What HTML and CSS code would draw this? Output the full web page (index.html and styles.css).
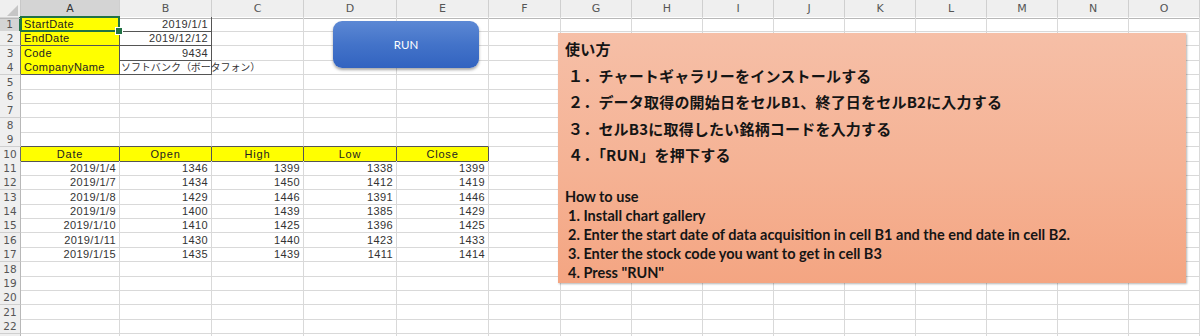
FILE: index.html
```html
<!DOCTYPE html>
<html lang="ja">
<head>
<meta charset="utf-8">
<title>Sheet</title>
<link rel="stylesheet" href="styles.css">
</head>
<body>
<div class="page">
  <div class="hdr">
    <div class="corner"><span class="tri"></span></div>
    <div class="ch sel">A</div><div class="ch">B</div><div class="ch">C</div><div class="ch">D</div><div class="ch">E</div><div class="ch">F</div><div class="ch">G</div><div class="ch">H</div><div class="ch">I</div><div class="ch">J</div><div class="ch">K</div><div class="ch">L</div><div class="ch">M</div><div class="ch">N</div><div class="ch">O</div>
  </div>

  <div class="row"><div class="rn sel dk">1</div><div class="c y bx active">StartDate</div><div class="c r bx">2019/1/1</div><div class="c"></div><div class="c"></div><div class="c"></div><div class="c"></div><div class="rest"></div></div>
  <div class="row"><div class="rn dk">2</div><div class="c y bx">EndDate</div><div class="c r bx">2019/12/12</div><div class="c"></div><div class="c"></div><div class="c"></div><div class="c"></div><div class="rest"></div></div>
  <div class="row"><div class="rn dk">3</div><div class="c y bx">Code</div><div class="c r bx">9434</div><div class="c"></div><div class="c"></div><div class="c"></div><div class="c"></div><div class="rest"></div></div>
  <div class="row"><div class="rn dk">4</div><div class="c y bx">CompanyName</div><div class="c bx jp">ソフトバンク（ボータフォン）</div><div class="c"></div><div class="c"></div><div class="c"></div><div class="c"></div><div class="rest"></div></div>
  <div class="row"><div class="rn">5</div><div class="c"></div><div class="c"></div><div class="c"></div><div class="c"></div><div class="c"></div><div class="c"></div><div class="rest"></div></div>
  <div class="row"><div class="rn">6</div><div class="c"></div><div class="c"></div><div class="c"></div><div class="c"></div><div class="c"></div><div class="c"></div><div class="rest"></div></div>
  <div class="row"><div class="rn">7</div><div class="c"></div><div class="c"></div><div class="c"></div><div class="c"></div><div class="c"></div><div class="c"></div><div class="rest"></div></div>
  <div class="row"><div class="rn">8</div><div class="c"></div><div class="c"></div><div class="c"></div><div class="c"></div><div class="c"></div><div class="c"></div><div class="rest"></div></div>
  <div class="row"><div class="rn">9</div><div class="c db"></div><div class="c db"></div><div class="c db"></div><div class="c db"></div><div class="c db"></div><div class="c"></div><div class="rest"></div></div>
  <div class="row"><div class="rn dk">10</div><div class="c y bx ctr">Date</div><div class="c y bx ctr">Open</div><div class="c y bx ctr">High</div><div class="c y bx ctr">Low</div><div class="c y bx ctr">Close</div><div class="c"></div><div class="rest"></div></div>
  <div class="row"><div class="rn">11</div><div class="c r">2019/1/4</div><div class="c r">1346</div><div class="c r">1399</div><div class="c r">1338</div><div class="c r">1399</div><div class="c"></div><div class="rest"></div></div>
  <div class="row"><div class="rn">12</div><div class="c r">2019/1/7</div><div class="c r">1434</div><div class="c r">1450</div><div class="c r">1412</div><div class="c r">1419</div><div class="c"></div><div class="rest"></div></div>
  <div class="row"><div class="rn">13</div><div class="c r">2019/1/8</div><div class="c r">1429</div><div class="c r">1446</div><div class="c r">1391</div><div class="c r">1446</div><div class="c"></div><div class="rest"></div></div>
  <div class="row"><div class="rn">14</div><div class="c r">2019/1/9</div><div class="c r">1400</div><div class="c r">1439</div><div class="c r">1385</div><div class="c r">1429</div><div class="c"></div><div class="rest"></div></div>
  <div class="row"><div class="rn">15</div><div class="c r">2019/1/10</div><div class="c r">1410</div><div class="c r">1425</div><div class="c r">1396</div><div class="c r">1425</div><div class="c"></div><div class="rest"></div></div>
  <div class="row"><div class="rn">16</div><div class="c r">2019/1/11</div><div class="c r">1430</div><div class="c r">1440</div><div class="c r">1423</div><div class="c r">1433</div><div class="c"></div><div class="rest"></div></div>
  <div class="row"><div class="rn">17</div><div class="c r">2019/1/15</div><div class="c r">1435</div><div class="c r">1439</div><div class="c r">1411</div><div class="c r">1414</div><div class="c"></div><div class="rest"></div></div>
  <div class="row"><div class="rn">18</div><div class="c"></div><div class="c"></div><div class="c"></div><div class="c"></div><div class="c"></div><div class="c"></div><div class="rest"></div></div>
  <div class="row"><div class="rn">19</div><div class="c"></div><div class="c"></div><div class="c"></div><div class="c"></div><div class="c"></div><div class="c"></div><div class="rest"></div></div>
  <div class="row"><div class="rn">20</div><div class="c"></div><div class="c"></div><div class="c"></div><div class="c"></div><div class="c"></div><div class="c"></div><div class="rest"></div></div>
  <div class="row"><div class="rn">21</div><div class="c"></div><div class="c"></div><div class="c"></div><div class="c"></div><div class="c"></div><div class="c"></div><div class="rest"></div></div>
  <div class="row"><div class="rn">22</div><div class="c"></div><div class="c"></div><div class="c"></div><div class="c"></div><div class="c"></div><div class="c"></div><div class="rest"></div></div>
  <div class="row"><div class="rn"></div><div class="c"></div><div class="c"></div><div class="c"></div><div class="c"></div><div class="c"></div><div class="c"></div><div class="rest"></div></div>

  <div class="run-btn">RUN</div>

  <div class="note">
    <p class="jh">使い方</p>
    <p class="jl">１．チャートギャラリーをインストールする</p>
    <p class="jl">２．データ取得の開始日をセルB1、終了日をセルB2に入力する</p>
    <p class="jl">３．セルB3に取得したい銘柄コードを入力する</p>
    <p class="jl">４．「RUN」を押下する</p>
    <p class="eh">How to use</p>
    <p class="el">1. Install chart gallery</p>
    <p class="el">2. Enter the start date of data acquisition in cell B1 and the end date in cell B2.</p>
    <p class="el">3. Enter the stock code you want to get in cell B3</p>
    <p class="el">4. Press "RUN"</p>
  </div>
</div>
</body>
</html>
```

FILE: styles.css
```css
* { box-sizing: border-box; }
html, body { margin: 0; padding: 0; background: #fff; }
.page {
  position: relative;
  width: 1200px;
  height: 336px;
  overflow: hidden;
  font-family: "Liberation Sans", "Noto Sans CJK JP", sans-serif;
  font-size: 11px;
  color: #222;
}
.hdr {
  display: grid;
  grid-template-columns: 21px 99px 92px 92px 93px 92px 72px repeat(9, 71px);
  height: 17px;
  background: #efefef;
}
.corner {
  position: relative;
  border-right: 1px solid #c8c8c8;
  border-bottom: 1px solid #b8b8b8;
}
.tri {
  position: absolute;
  right: 2px;
  bottom: 2px;
  width: 0;
  height: 0;
  border-left: 11px solid transparent;
  border-bottom: 11px solid #c6c6c6;
}
.ch {
  border-right: 1px solid #cfcfcf;
  border-bottom: 1px solid #b8b8b8;
  text-align: center;
  line-height: 17px;
  color: #555;
  font-family: "DejaVu Sans", sans-serif;
  font-size: 11px;
}
.ch.sel {
  background: #d4d4d4;
  border-bottom: 2px solid #217346;
  color: #333;
}
.row {
  display: grid;
  grid-template-columns: 21px 99px 92px 92px 93px 92px 72px 639px;
  height: 14.4px;
}
.rn {
  background: #efefef;
  border-right: 1px solid #b8b8b8;
  border-bottom: 1px solid #cfcfcf;
  text-align: center;
  color: #555;
  font-family: "DejaVu Sans", sans-serif;
  font-size: 10.5px;
  line-height: 14px;
}
.rn.sel { background: #d4d4d4; border-right: 2px solid #217346; }
.rn.dk { border-right-color: #6a6a6a; }
.rn.sel.dk { border-right-color: #217346; }
.c {
  border-right: 1px solid #d9d9d9;
  border-bottom: 1px solid #d9d9d9;
  padding: 0 3px;
  line-height: 14px;
  white-space: nowrap;
  letter-spacing: 0.4px;
  color: #333;
}
.c.r { text-align: right; }
.c.ctr { text-align: center; letter-spacing: 0.8px; color: #222; }
.c.y { background: #ffff00; color: #222; }
.c.bx { border-right-color: #555; border-bottom-color: #555; }
.c.db { border-bottom-color: #555; }
.c.jp {
  font-family: "Noto Sans CJK JP", sans-serif;
  font-size: 10px;
  letter-spacing: -0.1px;
  padding-left: 1px;
  line-height: 13px;
  overflow: visible;
}
.c.active { position: relative; }
.c.active::after {
  content: "";
  position: absolute;
  left: -1px;
  top: -1px;
  right: -1px;
  bottom: -1px;
  border: 2px solid #217346;
}
.c.active::before {
  content: "";
  position: absolute;
  right: -4px;
  bottom: -4px;
  width: 6px;
  height: 6px;
  background: #217346;
  border: 1px solid #fff;
  z-index: 2;
}
.rest {
  border-bottom: 1px solid #d9d9d9;
  background: repeating-linear-gradient(to right, transparent 0 70px, #d9d9d9 70px 71px);
}

.run-btn {
  position: absolute;
  left: 333px;
  top: 21px;
  width: 146px;
  height: 47px;
  border-radius: 9px;
  background: linear-gradient(to bottom, #5c88d4 0%, #4373c9 50%, #3263c0 100%);
  box-shadow: 0 2px 3px rgba(0, 0, 0, 0.35);
  color: #fff;
  display: flex;
  align-items: center;
  justify-content: center;
  font-family: "Lato", "Liberation Sans", sans-serif;
  font-size: 11.5px;
}

.note {
  position: absolute;
  left: 558px;
  top: 33px;
  width: 628px;
  height: 250px;
  padding: 3px 7px 0;
  background: linear-gradient(to bottom, #f6bfa7 0%, #f5b294 55%, #f4a582 100%);
  box-shadow: 1px 1px 2px rgba(0, 0, 0, 0.3);
  color: #151515;
}
.note p { margin: 0; white-space: nowrap; }
.jh, .jl {
  font-family: "Noto Sans CJK JP", sans-serif;
  font-weight: 700;
  font-size: 15px;
  line-height: 26.5px;
  letter-spacing: 0.2px;
}
.jl { padding-left: 3px; }
.eh, .el {
  font-family: "Lato", "Liberation Sans", sans-serif;
  font-weight: 700;
  font-size: 14.5px;
  line-height: 19px;
}
.eh { margin-top: 18px !important; }
.el { padding-left: 3px; }
```
